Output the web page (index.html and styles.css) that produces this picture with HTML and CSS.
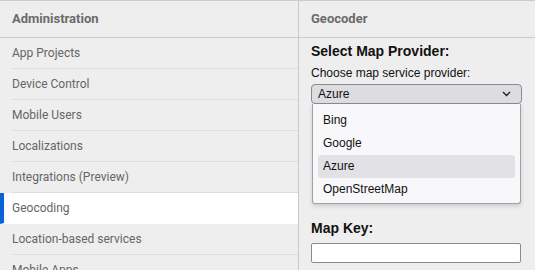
FILE: index.html
```html
<!DOCTYPE html>
<html lang="en">
<head>
    <meta charset="UTF-8">
    <title>Administration - Geocoder</title>
    <link rel="stylesheet" href="styles.css">
</head>
<body>
    <div class="admin">
        <nav class="side-nav">
            <div class="panel-header">Administration</div>
            <ul class="nav-list">
                <li class="nav-item">App Projects</li>
                <li class="nav-item">Device Control</li>
                <li class="nav-item">Mobile Users</li>
                <li class="nav-item">Localizations</li>
                <li class="nav-item">Integrations (Preview)</li>
                <li class="nav-item active">Geocoding</li>
                <li class="nav-item">Location-based services</li>
                <li class="nav-item">Mobile Apps</li>
            </ul>
        </nav>
        <main class="content">
            <div class="panel-header">Geocoder</div>
            <div class="form-body">
                <h2>Select Map Provider:</h2>
                <label class="hint">Choose map service provider:</label>
                <div class="select-wrap">
                    <div class="select-box">
                        <span>Azure</span>
                        <svg class="chevron" width="9" height="6" viewBox="0 0 9 6"><path d="M1 1l3.5 3.5L8 1" fill="none" stroke="#222" stroke-width="1.4"/></svg>
                    </div>
                    <ul class="options">
                        <li>Bing</li>
                        <li>Google</li>
                        <li class="selected">Azure</li>
                        <li>OpenStreetMap</li>
                    </ul>
                </div>
                <h2 class="key-title">Map Key:</h2>
                <input type="text" class="key-input">
            </div>
        </main>
    </div>
</body>
</html>
```
FILE: styles.css
```css
body {
    margin: 0;
    background: #eee;
    font-family: Roboto, "Liberation Sans", sans-serif;
}
.admin {
    display: flex;
    height: 270px;
    border-top: 1px solid #ccc;
    overflow: hidden;
}
.side-nav {
    width: 298px;
    border-right: 1px solid #c8c8c8;
    background: #eee;
}
.panel-header {
    height: 36px;
    line-height: 36px;
    padding-left: 12px;
    font-size: 13px;
    font-weight: bold;
    color: #6b6b6b;
    border-bottom: 1px solid #ccc;
}
.nav-list {
    list-style: none;
    margin: 0;
    padding: 0;
}
.nav-item {
    height: 30px;
    line-height: 30px;
    margin-left: 12px;
    font-size: 12px;
    color: #666;
    border-bottom: 1px solid #ddd;
}
.nav-item.active {
    margin-left: 0;
    background: #fff;
    border-left: 4px solid #0a64d6;
    padding-left: 8px;
    border-bottom-color: #fff;
}
.content {
    flex: 1;
    background: #eee;
}
.form-body {
    padding: 4px 13px 0 12px;
    font-family: "Liberation Sans", Arial, sans-serif;
    color: #111;
}
.form-body h2 {
    margin: 0;
    font-size: 14px;
    line-height: 18px;
}
.hint {
    display: block;
    font-size: 12px;
    margin-top: 6px;
    line-height: 14px;
}
.select-wrap {
    margin-top: 4px;
}
.select-box {
    display: flex;
    justify-content: space-between;
    align-items: center;
    height: 18px;
    padding: 0 10px 0 6px;
    background: #dcdce1;
    border: 1px solid #8a8a90;
    border-radius: 4px;
    font-size: 12px;
}
.options {
    list-style: none;
    margin: 0 1px;
    padding: 5px 5px 2px;
    background: #f8f8fa;
    border: 1px solid #a0a0a6;
    border-top: none;
    border-radius: 0 0 3px 3px;
    box-shadow: 0 2px 4px rgba(0, 0, 0, 0.15);
}
.options li {
    height: 23px;
    line-height: 23px;
    padding-left: 5px;
    font-size: 12px;
    border-radius: 3px;
}
.options li.selected {
    background: #e1e1e6;
}
.key-title {
    margin-top: 15px !important;
}
.key-input {
    display: block;
    box-sizing: border-box;
    width: 210px;
    height: 20px;
    margin-top: 6px;
    border: 1px solid #8a8a90;
    border-radius: 2px;
    background: #fff;
}
```
